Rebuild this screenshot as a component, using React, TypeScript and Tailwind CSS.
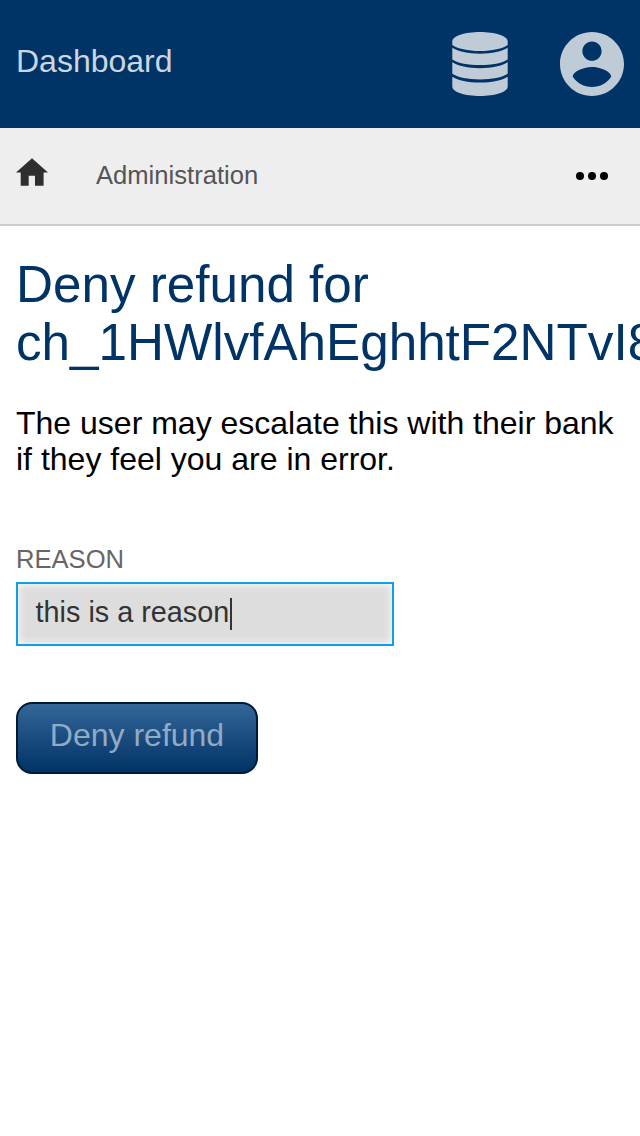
function DatabaseIcon() {
  return (
    <svg viewBox="0 0 56 64" className="h-16 w-14 fill-[#bfcbd7]">
      <path d="M.3 9.500C.3 4 13 0 28 0s27.700 4 27.700 9.500v3.500C51 16.500 40 19 28 19S5 16.500.3 13Z" />
      <path d="M.3 15.800C6 19.500 16 21.700 28 21.700s22-2.200 27.700-5.900v11.600C50 31 40 33.100 28 33.100S6 31 .3 27.400Z" />
      <path d="M.3 30.300C6 34 16 36.200 28 36.200s22-2.200 27.700-5.900v11.400C50 45.300 40 47.400 28 47.400S6 45.300.3 41.700Z" />
      <path d="M.3 44.700C6 48.400 16 50.600 28 50.600s22-2.200 27.700-5.900v9.800C55.700 60 43 64 28 64S.3 60 .3 54.500Z" />
    </svg>
  );
}

function AccountIcon() {
  return (
    <svg viewBox="2 2 20 20" className="size-16 fill-[#bfcbd7]">
      <path d="M12 2C6.480 2 2 6.480 2 12s4.480 10 10 10 10-4.480 10-10S17.520 2 12 2zm0 3c1.660 0 3 1.340 3 3s-1.340 3-3 3-3-1.340-3-3 1.340-3 3-3zm0 14.200c-2.500 0-4.710-1.280-6-3.220.03-1.990 4-3.080 6-3.080 1.990 0 5.970 1.090 6 3.080-1.290 1.940-3.500 3.220-6 3.220z" />
    </svg>
  );
}

function HomeIcon() {
  return (
    <svg viewBox="0 0 32 28" className="mb-2 h-7 w-8 fill-[#2f2f2f]">
      <path d="M16 .3 32 14.500h-4.400v13.200H19v-9.900h-6.300v9.900H4.700V14.500H0Z" />
    </svg>
  );
}

export default function App() {
  return (
    <div className="h-[1136px] w-[640px] overflow-hidden bg-white font-['Liberation_Sans',sans-serif] text-black">
      <header className="flex h-32 items-center justify-between bg-[#003366] px-4">
        <a className="pb-1.5 text-[32px] leading-9 text-[#ccd6e0]">Dashboard</a>
        <div className="flex items-center gap-[52px]">
          <DatabaseIcon />
          <AccountIcon />
        </div>
      </header>
      <nav className="flex h-[98px] items-center border-b-2 border-[#cccccc] bg-[#eeeeee] pr-8 pl-4">
        <HomeIcon />
        <a className="mb-0.5 ml-12 text-[25.600px] leading-8 text-[#555555]">Administration</a>
        <svg viewBox="0 0 32 8" className="ml-auto h-2 w-8">
          <circle cx="4" cy="4" r="4" /><circle cx="16" cy="4" r="4" /><circle cx="28" cy="4" r="4" />
        </svg>
      </nav>
      <main className="px-4 pt-[30px]">
        <h1 className="text-[51.200px] leading-[58px] text-[#003366]">Deny refund for ch_1HWlvfAhEghhtF2NTvI8</h1>
        <p className="mt-[33px] text-[32px] leading-9">The user may escalate this with their bank if they feel you are in error.</p>
        <form>
          <label className="mt-[67px] block text-[25.600px] leading-[30px] text-[#666666]">REASON</label>
          <div className="mt-2 flex h-16 w-[378px] items-center border-2 border-[#119fea] bg-[#dddddd] pl-[17.600px] text-[28.800px] leading-8 text-[#333333] shadow-[inset_0_0_8px_#ffffff]">
            <span className="pb-1">this is a reason</span><span className="ml-px h-8 w-0.5 bg-[#333333]" />
          </div>
          <button type="button" className="mt-14 h-[72px] w-[242px] rounded-2xl border-2 border-[#001a33] bg-linear-to-b from-[#336699] to-[#003366] pb-1.5 text-[32px] text-[#91abc5]">Deny refund</button>
        </form>
      </main>
    </div>
  );
}
